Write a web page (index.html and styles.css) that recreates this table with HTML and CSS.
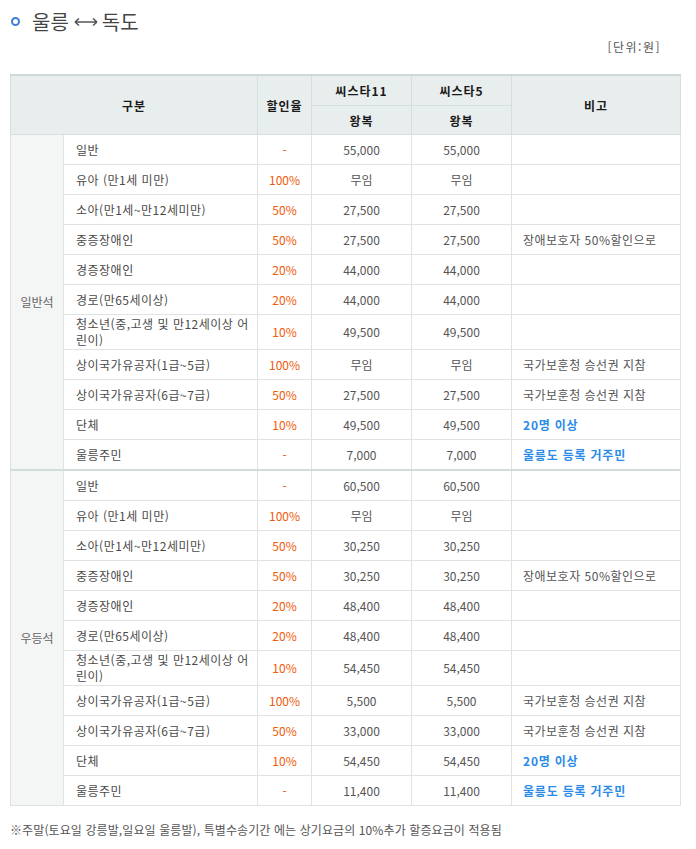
FILE: index.html
```html
<!DOCTYPE html>
<html lang="ko">
<head>
<meta charset="utf-8">
<link rel="stylesheet" href="styles.css">
</head>
<body>
<div class="page">
  <h2 class="title">
    <span class="bullet"></span>
    <span>울릉</span>
    <svg class="arrow" width="24" height="10" viewBox="0 0 24 10"><path d="M1 5h22M1 5l4-3.5M1 5l4 3.5M23 5l-4-3.5M23 5l-4 3.5" stroke="#555" stroke-width="1.6" fill="none"/></svg>
    <span>독도</span>
  </h2>
  <div class="unit">[단위:원]</div>
  <table class="fare">
    <colgroup>
      <col class="c1"><col class="c2"><col class="c3"><col class="c4"><col class="c5"><col class="c6">
    </colgroup>
    <thead>
      <tr class="h1">
        <th colspan="2" rowspan="2">구분</th>
        <th rowspan="2">할인율</th>
        <th>씨스타11</th>
        <th>씨스타5</th>
        <th rowspan="2">비고</th>
      </tr>
      <tr class="h2">
        <th>왕복</th>
        <th>왕복</th>
      </tr>
    </thead>
    <tbody>
      <tr><td class="grp" rowspan="11">일반석</td><td class="cat">일반</td><td class="rate">-</td><td class="num">55,000</td><td class="num">55,000</td><td class="note"></td></tr>
      <tr><td class="cat">유아 (만1세 미만)</td><td class="rate">100%</td><td class="num">무임</td><td class="num">무임</td><td class="note"></td></tr>
      <tr><td class="cat">소아(만1세~만12세미만)</td><td class="rate">50%</td><td class="num">27,500</td><td class="num">27,500</td><td class="note"></td></tr>
      <tr><td class="cat">중증장애인</td><td class="rate">50%</td><td class="num">27,500</td><td class="num">27,500</td><td class="note">장애보호자 50%할인으로</td></tr>
      <tr><td class="cat">경증장애인</td><td class="rate">20%</td><td class="num">44,000</td><td class="num">44,000</td><td class="note"></td></tr>
      <tr><td class="cat">경로(만65세이상)</td><td class="rate">20%</td><td class="num">44,000</td><td class="num">44,000</td><td class="note"></td></tr>
      <tr class="tall"><td class="cat">청소년(중,고생 및 만12세이상 어<br>린이)</td><td class="rate">10%</td><td class="num">49,500</td><td class="num">49,500</td><td class="note"></td></tr>
      <tr><td class="cat">상이국가유공자(1급~5급)</td><td class="rate">100%</td><td class="num">무임</td><td class="num">무임</td><td class="note">국가보훈청 승선권 지참</td></tr>
      <tr><td class="cat">상이국가유공자(6급~7급)</td><td class="rate">50%</td><td class="num">27,500</td><td class="num">27,500</td><td class="note">국가보훈청 승선권 지참</td></tr>
      <tr><td class="cat">단체</td><td class="rate">10%</td><td class="num">49,500</td><td class="num">49,500</td><td class="note blue">20명 이상</td></tr>
      <tr><td class="cat">울릉주민</td><td class="rate">-</td><td class="num">7,000</td><td class="num">7,000</td><td class="note blue">울릉도 등록 거주민</td></tr>
    </tbody>
    <tbody class="second">
      <tr><td class="grp" rowspan="11">우등석</td><td class="cat">일반</td><td class="rate">-</td><td class="num">60,500</td><td class="num">60,500</td><td class="note"></td></tr>
      <tr><td class="cat">유아 (만1세 미만)</td><td class="rate">100%</td><td class="num">무임</td><td class="num">무임</td><td class="note"></td></tr>
      <tr><td class="cat">소아(만1세~만12세미만)</td><td class="rate">50%</td><td class="num">30,250</td><td class="num">30,250</td><td class="note"></td></tr>
      <tr><td class="cat">중증장애인</td><td class="rate">50%</td><td class="num">30,250</td><td class="num">30,250</td><td class="note">장애보호자 50%할인으로</td></tr>
      <tr><td class="cat">경증장애인</td><td class="rate">20%</td><td class="num">48,400</td><td class="num">48,400</td><td class="note"></td></tr>
      <tr><td class="cat">경로(만65세이상)</td><td class="rate">20%</td><td class="num">48,400</td><td class="num">48,400</td><td class="note"></td></tr>
      <tr class="tall"><td class="cat">청소년(중,고생 및 만12세이상 어<br>린이)</td><td class="rate">10%</td><td class="num">54,450</td><td class="num">54,450</td><td class="note"></td></tr>
      <tr><td class="cat">상이국가유공자(1급~5급)</td><td class="rate">100%</td><td class="num">5,500</td><td class="num">5,500</td><td class="note">국가보훈청 승선권 지참</td></tr>
      <tr><td class="cat">상이국가유공자(6급~7급)</td><td class="rate">50%</td><td class="num">33,000</td><td class="num">33,000</td><td class="note">국가보훈청 승선권 지참</td></tr>
      <tr><td class="cat">단체</td><td class="rate">10%</td><td class="num">54,450</td><td class="num">54,450</td><td class="note blue">20명 이상</td></tr>
      <tr><td class="cat">울릉주민</td><td class="rate">-</td><td class="num">11,400</td><td class="num">11,400</td><td class="note blue">울릉도 등록 거주민</td></tr>
    </tbody>
  </table>
  <p class="foot">※주말(토요일 강릉발,일요일 울릉발), 특별수송기간 에는 상기요금의 10%추가 할증요금이 적용됨</p>
</div>
</body>
</html>
```

FILE: styles.css
```css
html, body {
  margin: 0;
  padding: 0;
  background: #fff;
}
body {
  font-family: "Noto Sans CJK KR", "Noto Sans", sans-serif;
  font-size: 12px;
  color: #555;
}
.page {
  padding: 8px 10px 0 10px;
  width: 670px;
}
.title {
  display: flex;
  align-items: center;
  margin: 0;
  height: 26px;
  font-size: 20px;
  font-weight: normal;
  color: #444;
}
.bullet {
  width: 5px;
  height: 5px;
  border: 2.5px solid #3b7fd8;
  border-radius: 50%;
  margin: 0 12px 0 1px;
}
.arrow {
  margin: 2px 4px 0 5px;
}
.unit {
  text-align: right;
  padding-right: 19px;
  margin-top: 4px;
  height: 18px;
  line-height: 18px;
  color: #555;
  letter-spacing: 1.5px;
}
.fare {
  margin-top: 18px;
  width: 670px;
  border-collapse: collapse;
  table-layout: fixed;
  border-top: 2px solid #cdd8d8;
  border-left: 1px solid #d8dddd;
  border-right: 1px solid #d8dddd;
  border-bottom: 1px solid #d8dddd;
}
.c1 { width: 53px; }
.c2 { width: 194px; }
.c3 { width: 54px; }
.c4 { width: 100px; }
.c5 { width: 100px; }
.c6 { width: 169px; }
.fare th {
  background: #e8eded;
  color: #1a1a1a;
  font-weight: bold;
  font-size: 12px;
  border: 1px solid #d6dede;
  padding: 0;
  letter-spacing: 1px;
}
.h1 th { height: 29px; }
.h2 th { height: 28px; }
.fare td {
  border: 1px solid #e1e3e3;
  height: 29px;
  padding: 0;
  line-height: 16px;
}
.fare tr.tall td { height: 34px; }
.fare td.grp {
  background: #f4f5f5;
  text-align: center;
  color: #666;
  border-color: #dde2e2;
}
.fare td.cat {
  padding-left: 12px;
  color: #4a4a4a;
  letter-spacing: 0.5px;
}
.fare td.rate {
  text-align: center;
  color: #f05a0a;
}
.fare td.num {
  text-align: center;
  color: #555;
}
.fare td.note {
  padding-left: 11px;
  color: #555;
  letter-spacing: 0.5px;
}
.fare td.note.blue {
  color: #2a8be8;
  font-weight: bold;
  letter-spacing: 0.8px;
}
.fare tbody.second tr:first-child td {
  border-top: 2px solid #d3dcdc;
}
.foot {
  margin: 15px 0 0 0;
  color: #555;
  letter-spacing: 0.1px;
}
```
